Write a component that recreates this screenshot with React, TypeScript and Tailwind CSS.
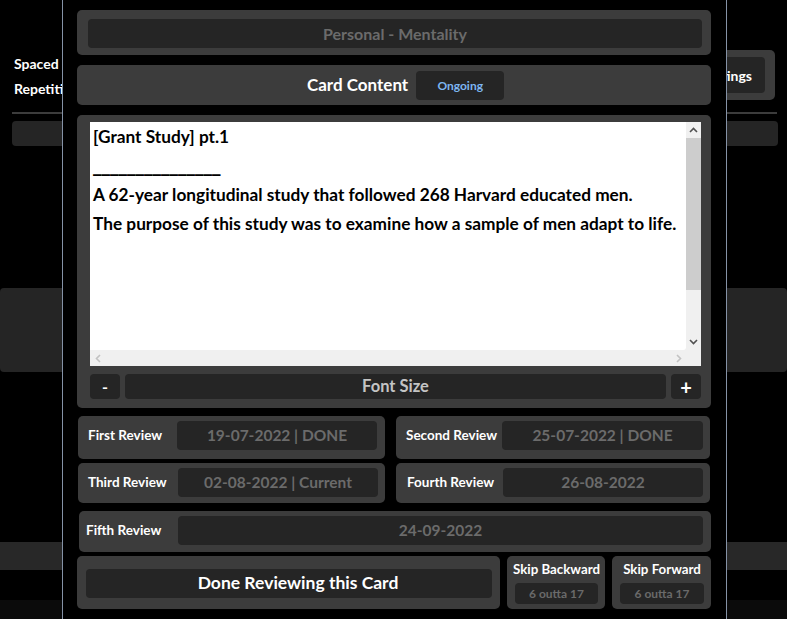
import React from "react";

const Panel = ({ className = "", children }: { className?: string; children?: React.ReactNode }) => (
  <div className={`bg-[#3c3c3c] rounded-[5px] ${className}`}>{children}</div>
);

const Inner = ({ className = "", children }: { className?: string; children?: React.ReactNode }) => (
  <div className={`bg-[#252525] rounded-[4px] flex items-center justify-center ${className}`}>{children}</div>
);

const ChevUp = ({ color }: { color: string }) => (
  <svg width="9" height="6" viewBox="0 0 9 6"><polyline points="1,5 4.5,1.5 8,5" fill="none" stroke={color} strokeWidth="1.6" /></svg>
);
const ChevDown = ({ color }: { color: string }) => (
  <svg width="9" height="6" viewBox="0 0 9 6"><polyline points="1,1 4.5,4.5 8,1" fill="none" stroke={color} strokeWidth="1.6" /></svg>
);
const ChevLeft = ({ color }: { color: string }) => (
  <svg width="6" height="9" viewBox="0 0 6 9"><polyline points="5,1 1.5,4.5 5,8" fill="none" stroke={color} strokeWidth="1.6" /></svg>
);
const ChevRight = ({ color }: { color: string }) => (
  <svg width="6" height="9" viewBox="0 0 6 9"><polyline points="1,1 4.5,4.5 1,8" fill="none" stroke={color} strokeWidth="1.6" /></svg>
);

function ReviewPanel({ label, value, className, boxClass }: { label: string; value: string; className: string; boxClass: string }) {
  return (
    <Panel className={`flex items-center ${className}`}>
      <span className="text-white font-bold text-[13.5px] whitespace-nowrap">{label}</span>
      <Inner className={`ml-auto h-[29px] text-[15.5px] font-bold text-[#6b6b6b] ${boxClass}`}>{value}</Inner>
    </Panel>
  );
}

export default function App() {
  return (
    <div className="relative w-[787px] h-[619px] overflow-hidden bg-black font-['Lato',sans-serif]">
      {/* background app */}
      <div className="flex flex-col">
        <div className="pt-[50px]">
          <div className="h-[50px] flex items-center justify-between pl-[14px] pr-[12px]">
            <div className="w-[80px] text-white font-bold text-[14px] leading-[25px] mt-[2px]">Spaced Repetition</div>
            <div className="bg-[#3c3c3c] rounded-[5px] h-[50px] pt-[7px] pb-[7px] pl-[8px] pr-[10px]">
              <div className="bg-[#252525] rounded-[4px] h-full flex items-center px-[13px] text-white font-bold text-[14px]">Settings</div>
            </div>
          </div>
        </div>
        <div className="mt-[12px] h-[2px] bg-[#3c3c3c] ml-[12px] mr-[10px]" />
        <div className="mt-[7px] h-[25px] rounded-[4px] bg-[#252525] ml-[12px] mr-[9px]" />
        <div className="mt-[142px] h-[84px] rounded-[4px] bg-[#252525]" />
        <div className="mt-[170px] h-[28px] bg-[#282828]" />
        <div className="mt-[30px] h-[19px] bg-[#0b0b0b]" />
      </div>

      {/* modal */}
      <div className="absolute top-0 left-[62px] w-[665px] h-[619px] bg-black border-x border-[#8592a6] pl-[14px] pr-[15px] pt-[10px] flex flex-col">
        <Panel className="h-[45px] pl-[11px] pr-[9px] pt-[9px] pb-[7px]">
          <Inner className="h-full text-[16px] font-bold text-[#6b6b6b]">Personal - Mentality</Inner>
        </Panel>

        <Panel className="mt-[10px] h-[40px] flex items-center pl-[230px] gap-[8px]">
          <span className="text-white font-bold text-[17px]">Card Content</span>
          <Inner className="w-[88px] h-[29px] mt-[1px] text-[12px] font-bold text-[#7db6f2]">Ongoing</Inner>
        </Panel>

        <Panel className="mt-[10px] pt-[7px] pl-[13px] pr-[10px] pb-[9px]">
          <div className="h-[244px] flex flex-col bg-[#f0f0f0]">
            <div className="flex h-[228px]">
              <div className="flex-1 bg-white rounded-br-[3px] pl-[3px] text-black font-bold text-[17.25px] leading-[29px] whitespace-nowrap overflow-hidden">
                <div>[Grant Study] pt.1</div>
                <div className="font-['DejaVu_Sans',sans-serif] text-[17px] leading-[31px]">_______________</div>
                <div className="-mt-[2px]">A 62-year longitudinal study that followed 268 Harvard educated men.</div>
                <div>The purpose of this study was to examine how a sample of men adapt to life.</div>
              </div>
              <div className="w-[15px] flex flex-col bg-[#f0f0f0]">
                <div className="h-[16px] flex items-center justify-center"><ChevUp color="#505050" /></div>
                <div className="h-[152px] bg-[#cdcdcd]" />
                <div className="flex-1" />
                <div className="h-[17px] flex items-center justify-center"><ChevDown color="#505050" /></div>
              </div>
            </div>
            <div className="h-[16px] flex items-center">
              <div className="w-[15px] flex justify-center"><ChevLeft color="#c2c2c2" /></div>
              <div className="flex-1" />
              <div className="w-[15px] flex justify-center"><ChevRight color="#c2c2c2" /></div>
              <div className="w-[15px]" />
            </div>
          </div>
          <div className="mt-[8px] h-[25px] flex gap-[5px]">
            <Inner className="w-[30px] text-white font-bold text-[16px]">-</Inner>
            <Inner className="flex-1 text-[#c4c4c4] font-bold text-[16.5px]">Font Size</Inner>
            <Inner className="w-[30px] text-white font-bold text-[20px]">+</Inner>
          </div>
        </Panel>

        <div className="mt-[8px] h-[43px] flex gap-[11px] pl-[1px]">
          <ReviewPanel label="First Review" value="19-07-2022 | DONE" className="w-[307px] pl-[10px] pr-[8px] pt-[5px] pb-[9px]" boxClass="w-[200px]" />
          <ReviewPanel label="Second Review" value="25-07-2022 | DONE" className="w-[314px] pl-[10px] pr-[7px] pt-[5px] pb-[9px]" boxClass="w-[201px]" />
        </div>
        <div className="mt-[4px] h-[40px] flex gap-[11px] pl-[1px]">
          <ReviewPanel label="Third Review" value="02-08-2022 | Current" className="w-[307px] pl-[10px] pr-[7px] pt-[5px] pb-[6px]" boxClass="w-[200px]" />
          <ReviewPanel label="Fourth Review" value="26-08-2022" className="w-[314px] pl-[11px] pr-[7px] pt-[5px] pb-[6px]" boxClass="w-[200px]" />
        </div>
        <div className="mt-[8px] h-[41px] flex pl-[2px]">
          <ReviewPanel label="Fifth Review" value="24-09-2022" className="flex-1 pl-[7px] pr-[8px] pt-[5px] pb-[7px]" boxClass="w-[525px]" />
        </div>

        <div className="mt-[4px] h-[53px] flex gap-[7px]">
          <Panel className="w-[423px] pl-[9px] pr-[8px] pt-[13px] pb-[11px]">
            <Inner className="h-full pl-[18px] text-white font-bold text-[17.5px]">Done Reviewing this Card</Inner>
          </Panel>
          <Panel className="w-[98px] flex flex-col items-center pl-[8px] pr-[7px] pb-[5px]">
            <div className="h-[27px] flex items-center text-white font-bold text-[13.3px] whitespace-nowrap">Skip Backward</div>
            <Inner className="w-full h-[21px] text-[#6a6a6a] font-bold text-[12px]">6 outta 17</Inner>
          </Panel>
          <Panel className="w-[99px] flex flex-col items-center pl-[8px] pr-[7px] pb-[5px]">
            <div className="h-[27px] flex items-center text-white font-bold text-[13.3px] whitespace-nowrap">Skip Forward</div>
            <Inner className="w-full h-[21px] text-[#6a6a6a] font-bold text-[12px]">6 outta 17</Inner>
          </Panel>
        </div>
      </div>
    </div>
  );
}
